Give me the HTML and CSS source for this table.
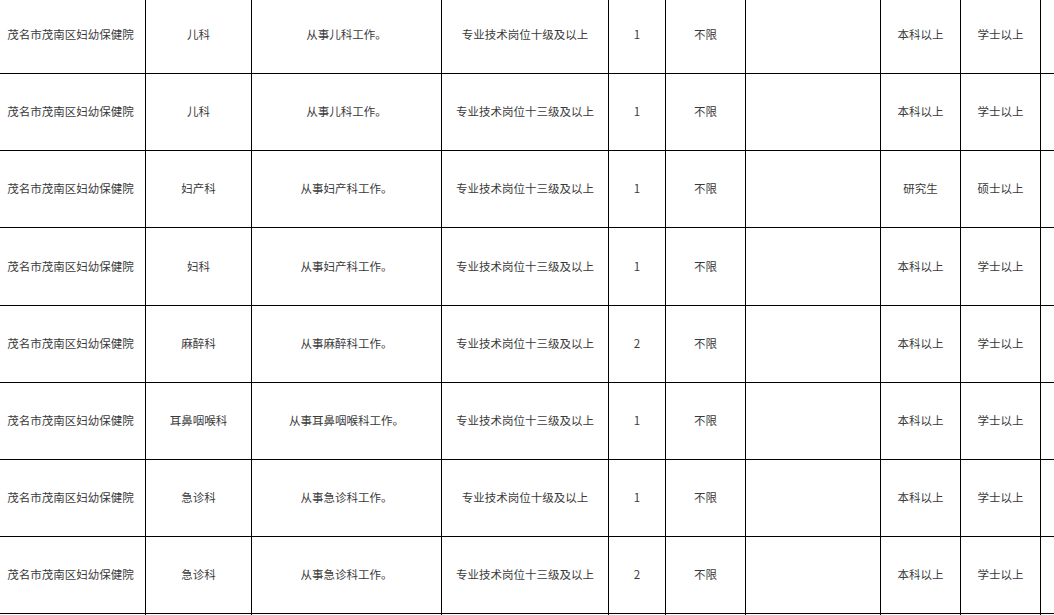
FILE: index.html
```html
<!DOCTYPE html>
<html lang="zh-CN">
<head>
<meta charset="utf-8">
<title>招聘岗位表</title>
<link rel="stylesheet" href="styles.css">
</head>
<body>
<table class="jobs">
  <colgroup>
    <col class="c1"><col class="c2"><col class="c3"><col class="c4"><col class="c5">
    <col class="c6"><col class="c7"><col class="c8"><col class="c9"><col class="c10">
  </colgroup>
  <tbody>
    <tr class="r77"><td>茂名市茂南区妇幼保健院</td><td>儿科</td><td>从事儿科工作。</td><td>专业技术岗位十级及以上</td><td>1</td><td>不限</td><td></td><td>本科以上</td><td>学士以上</td><td></td></tr>
    <tr class="r77"><td>茂名市茂南区妇幼保健院</td><td>儿科</td><td>从事儿科工作。</td><td>专业技术岗位十三级及以上</td><td>1</td><td>不限</td><td></td><td>本科以上</td><td>学士以上</td><td></td></tr>
    <tr class="r77"><td>茂名市茂南区妇幼保健院</td><td>妇产科</td><td>从事妇产科工作。</td><td>专业技术岗位十三级及以上</td><td>1</td><td>不限</td><td></td><td>研究生</td><td>硕士以上</td><td></td></tr>
    <tr class="r78"><td>茂名市茂南区妇幼保健院</td><td>妇科</td><td>从事妇产科工作。</td><td>专业技术岗位十三级及以上</td><td>1</td><td>不限</td><td></td><td>本科以上</td><td>学士以上</td><td></td></tr>
    <tr class="r77"><td>茂名市茂南区妇幼保健院</td><td>麻醉科</td><td>从事麻醉科工作。</td><td>专业技术岗位十三级及以上</td><td>2</td><td>不限</td><td></td><td>本科以上</td><td>学士以上</td><td></td></tr>
    <tr class="r77"><td>茂名市茂南区妇幼保健院</td><td>耳鼻咽喉科</td><td>从事耳鼻咽喉科工作。</td><td>专业技术岗位十三级及以上</td><td>1</td><td>不限</td><td></td><td>本科以上</td><td>学士以上</td><td></td></tr>
    <tr class="r77"><td>茂名市茂南区妇幼保健院</td><td>急诊科</td><td>从事急诊科工作。</td><td>专业技术岗位十级及以上</td><td>1</td><td>不限</td><td></td><td>本科以上</td><td>学士以上</td><td></td></tr>
    <tr class="r77"><td>茂名市茂南区妇幼保健院</td><td>急诊科</td><td>从事急诊科工作。</td><td>专业技术岗位十三级及以上</td><td>2</td><td>不限</td><td></td><td>本科以上</td><td>学士以上</td><td></td></tr>
    <tr class="r77"><td></td><td></td><td></td><td></td><td></td><td></td><td></td><td></td><td></td><td></td></tr>
  </tbody>
</table>
</body>
</html>
```

FILE: styles.css
```css
html, body {
  margin: 0;
  padding: 0;
  background: #ffffff;
  overflow: hidden;
}

body {
  font-family: "Noto Sans CJK SC", "Noto Sans", sans-serif;
  font-size: 11.5px;
  color: #3a3a3a;
}

.jobs {
  border-collapse: collapse;
  table-layout: fixed;
  width: 1125px;
  margin-left: -5px;
  margin-top: -4px;
}

.jobs td {
  border: 1px solid #000000;
  padding: 0 0 2px 0;
  text-align: center;
  vertical-align: middle;
  white-space: nowrap;
  line-height: 16px;
}

.r77 { height: 77px; }
.r78 { height: 78px; }

.c1 { width: 150px; }
.c2 { width: 106px; }
.c3 { width: 190px; }
.c4 { width: 167px; }
.c5 { width: 57px; }
.c6 { width: 80px; }
.c7 { width: 135px; }
.c8 { width: 80px; }
.c9 { width: 80px; }
.c10 { width: 80px; }
```
